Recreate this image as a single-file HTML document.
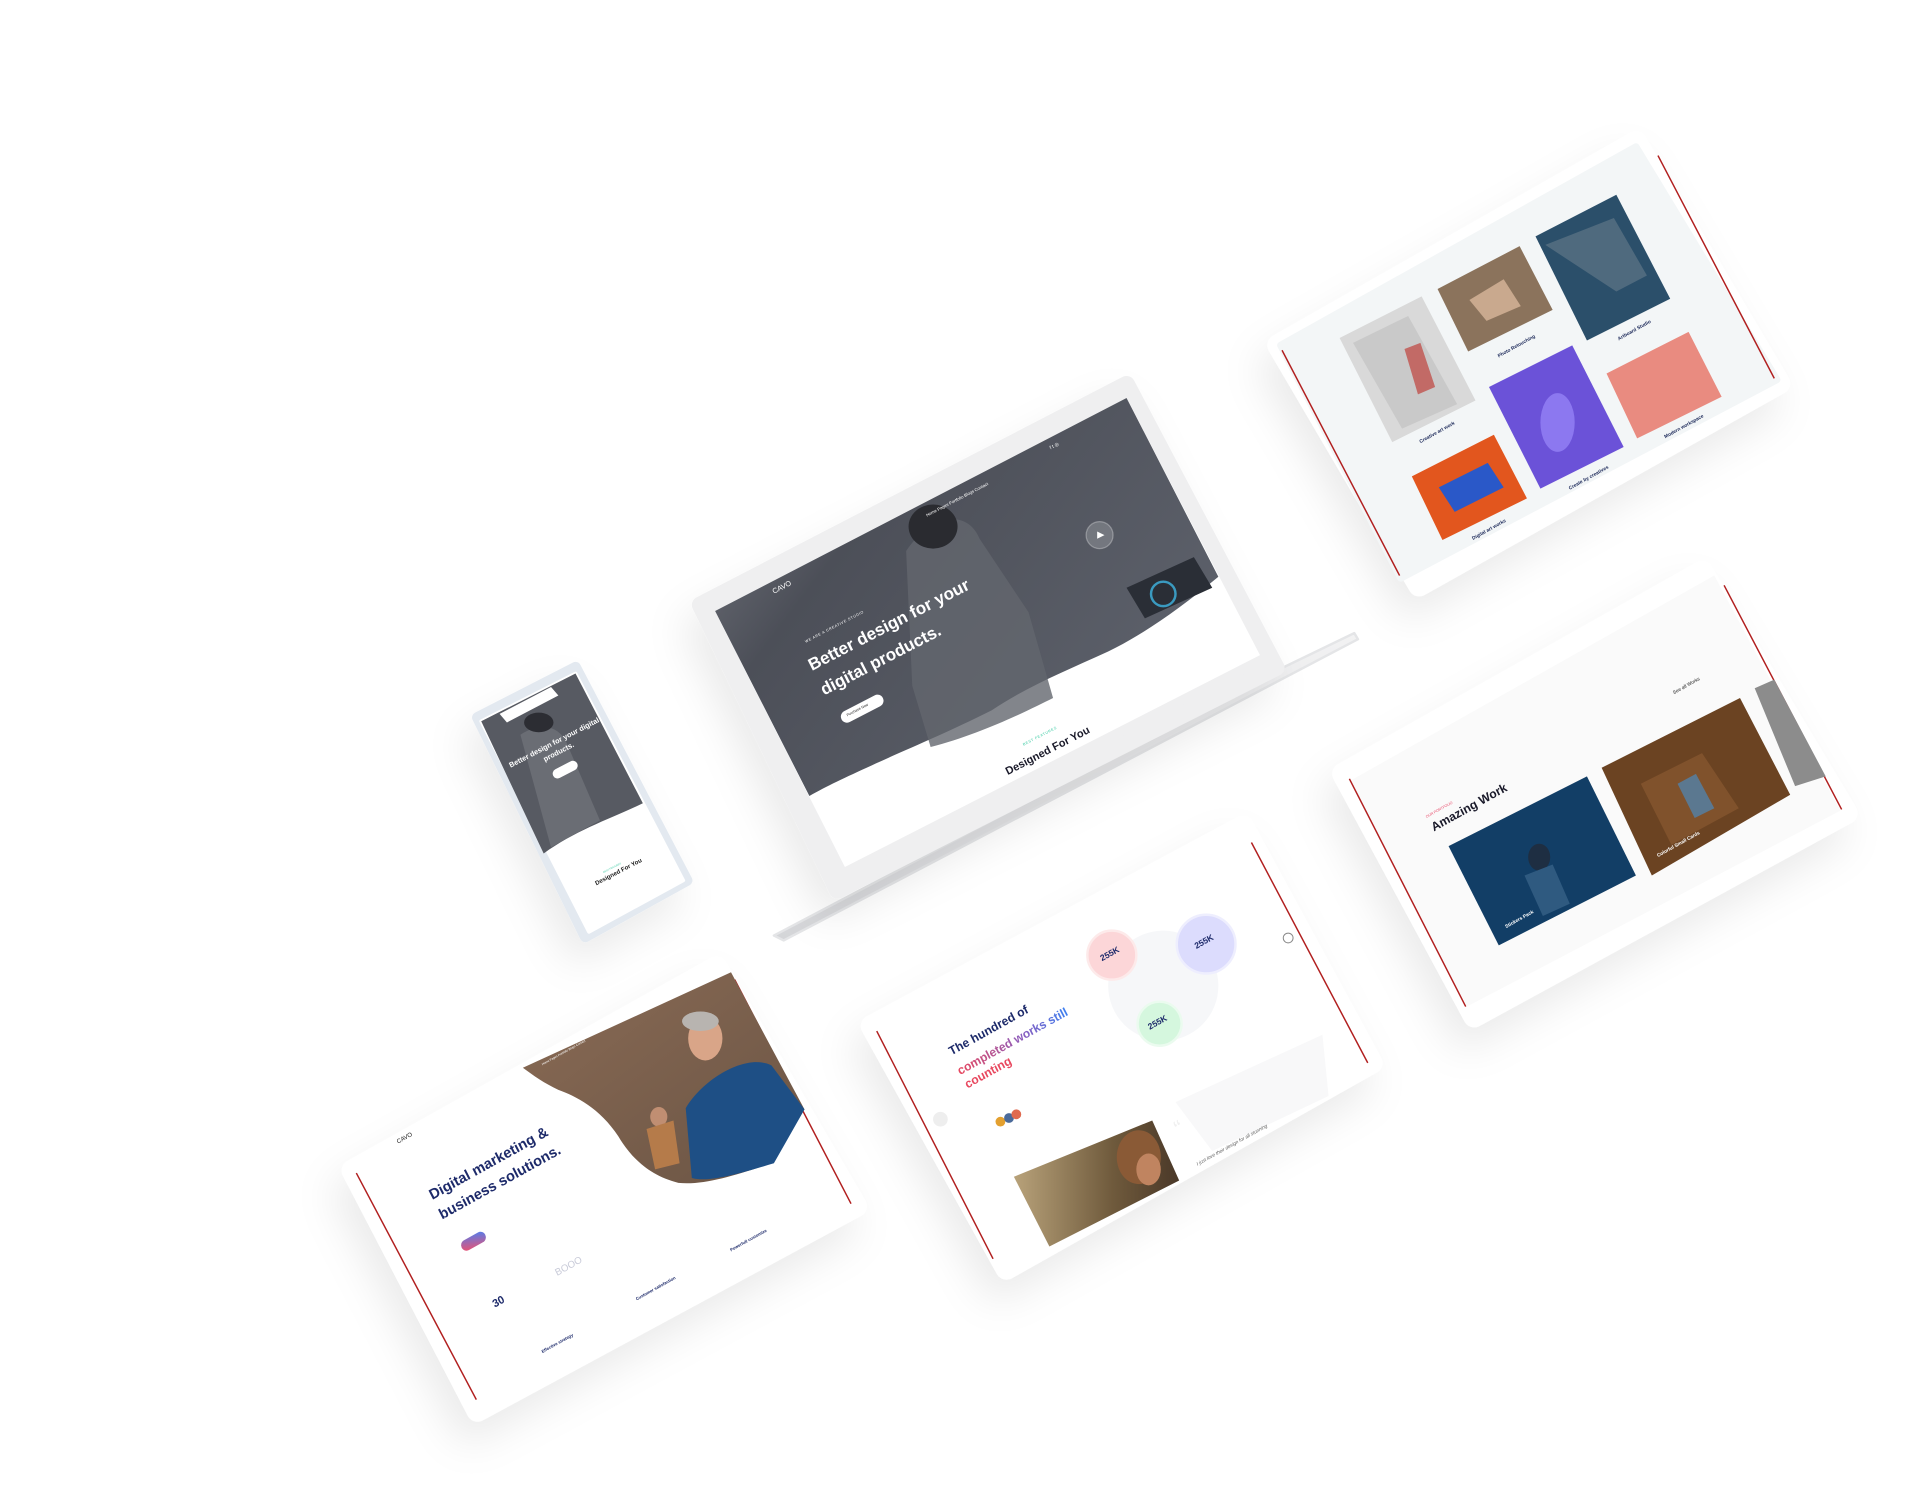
<!DOCTYPE html>
<html><head><meta charset="utf-8"><style>
html,body{margin:0;padding:0;background:#fff;width:1920px;height:1485px;overflow:hidden}
svg{display:block}
text{font-family:"Liberation Sans",sans-serif}
</style></head><body>
<svg width="1920" height="1485" viewBox="0 0 1568 1212.7" xmlns="http://www.w3.org/2000/svg">
<defs>
<filter id="sh" x="-30%" y="-30%" width="160%" height="160%"><feDropShadow dx="-8" dy="18" stdDeviation="16" flood-color="#000" flood-opacity="0.08"/></filter>
<linearGradient id="hero" x1="0" y1="0" x2="1" y2="0.6"><stop offset="0" stop-color="#7a7d85"/><stop offset="0.35" stop-color="#4c4f58"/><stop offset="1" stop-color="#5d616b"/></linearGradient>
<linearGradient id="btn" x1="0" y1="1" x2="1" y2="0"><stop offset="0" stop-color="#f0506e"/><stop offset="1" stop-color="#4f7ff0"/></linearGradient>
<linearGradient id="txtg" x1="0" y1="0" x2="1" y2="0"><stop offset="0" stop-color="#e8485f"/><stop offset="0.6" stop-color="#8a5fc0"/><stop offset="1" stop-color="#3d7ff0"/></linearGradient>
<linearGradient id="brn" x1="0" y1="0" x2="1" y2="1"><stop offset="0" stop-color="#8a6b55"/><stop offset="1" stop-color="#6a5444"/></linearGradient>
<linearGradient id="wom" x1="0" y1="0" x2="1" y2="0"><stop offset="0" stop-color="#b8a27a"/><stop offset="0.6" stop-color="#6f5a3c"/><stop offset="1" stop-color="#4a3828"/></linearGradient>
<linearGradient id="base" x1="0" y1="0" x2="0" y2="1"><stop offset="0" stop-color="#f2f2f3"/><stop offset="1" stop-color="#d4d5d8"/></linearGradient>
</defs>

<!-- TOP RIGHT TABLET -->
<g filter="url(#sh)">
<polygon points="1044,282 1336,116 1453,313 1159,478" fill="#fff" stroke="#fff" stroke-width="18" stroke-linejoin="round"/>
</g>
<polygon points="1046,282 1336,120 1451,310 1144,472" fill="#f3f6f7" stroke="#f3f6f7" stroke-width="6" stroke-linejoin="round"/>
<line x1="1047" y1="286" x2="1143" y2="470" stroke="#b11f1f" stroke-width="1.2"/>
<line x1="1354" y1="127" x2="1449" y2="309" stroke="#b11f1f" stroke-width="1.2"/>
<polygon points="1094,276 1161,242 1205,327 1137,361" fill="#d9d9d9"/>
<polygon points="1105,280 1150,258 1190,330 1145,350" fill="#b9b9b9" opacity="0.5"/>
<polygon points="1147,285 1160,280 1172,316 1158,322" fill="#c26a66"/>
<polygon points="1174,236 1241,201 1268,253 1199,287" fill="#8b735c"/>
<polygon points="1200,245 1228,228 1242,250 1214,262" fill="#c9a98e"/>
<polygon points="1254,193 1320,159 1364,244 1296,278" fill="#2b4f6a"/>
<polygon points="1262,200 1318,178 1345,225 1320,238" fill="#4f6a7e"/>
<polygon points="1216,316 1284,282 1326,365 1258,399" fill="#6b52d8"/>
<ellipse cx="1272" cy="345" rx="14" ry="24" fill="#8c78f0"/>
<polygon points="1312,305 1379,271 1406,324 1337,358" fill="#e98b80"/>
<polygon points="1153,389 1220,355 1247,407 1178,441" fill="#e2561e"/>
<polygon points="1175,398 1215,378 1228,398 1188,418" fill="#2a58c8"/>
<g font-size="4" fill="#1d2a5a" font-weight="bold">
<text transform="matrix(0.874 -0.486 0.457 0.89 1160 362)">Creative art work</text>
<text transform="matrix(0.874 -0.486 0.457 0.89 1224 292)">Photo Retouching</text>
<text transform="matrix(0.874 -0.486 0.457 0.89 1322 278)">Artboard Studio</text>
<text transform="matrix(0.874 -0.486 0.457 0.89 1282 400)">Create by creatives</text>
<text transform="matrix(0.874 -0.486 0.457 0.89 1360 358)">Modern workspace</text>
<text transform="matrix(0.874 -0.486 0.457 0.89 1203 441)">Digital art works</text>
</g>

<!-- RIGHT MIDDLE TABLET -->
<g filter="url(#sh)">
<polygon points="1097,632 1390,467 1508,664 1204,830" fill="#fff" stroke="#fff" stroke-width="18" stroke-linejoin="round"/>
</g>
<polygon points="1102,638 1400,470 1503,662 1198,822" fill="#fafafa"/>
<line x1="1102" y1="636" x2="1197" y2="822" stroke="#b11f1f" stroke-width="1.2"/>
<line x1="1408" y1="478" x2="1504" y2="661" stroke="#b11f1f" stroke-width="1.2"/>
<polygon points="1183,691 1296,634 1336,715 1224,772" fill="#123e66"/>
<ellipse cx="1257" cy="700" rx="9" ry="11" fill="#1e2e42"/>
<polygon points="1245,715 1268,706 1282,738 1260,748" fill="#2f5a80"/>
<polygon points="1308,627 1421,570 1462,649 1349,715" fill="#6b4322"/>
<polygon points="1340,640 1390,615 1420,660 1365,690" fill="#80522c"/>
<polygon points="1370,640 1385,632 1400,660 1384,668" fill="#5b7890"/>
<polygon points="1433,562 1449,555 1491,634 1466,642" fill="#8c8c8c"/>
<text transform="matrix(0.874 -0.486 0.457 0.89 1171 679)" font-size="10" font-weight="bold" fill="#1a1a2a">Amazing Work</text>
<text transform="matrix(0.874 -0.486 0.457 0.89 1165 668)" font-size="3" fill="#e84a6a">OUR PORTFOLIO</text>
<text transform="matrix(0.874 -0.486 0.457 0.89 1367 567)" font-size="4" fill="#222">See all Works</text>
<text transform="matrix(0.874 -0.486 0.457 0.89 1230 758)" font-size="4" font-weight="bold" fill="#fff">Stickers Pack</text>
<text transform="matrix(0.874 -0.486 0.457 0.89 1354 700)" font-size="4" font-weight="bold" fill="#fff">Colorful Small Cards</text>

<!-- LAPTOP base -->
<polygon points="632,764 1046,546 1106,517 1109,522 640,768" fill="url(#base)" stroke="#e4e5e7" stroke-width="2" stroke-linejoin="round"/>
<!-- LAPTOP lid -->
<g filter="url(#sh)">
<polygon points="572,494 920,314 1042,545 684,727" fill="#efeff0" stroke="#efeff0" stroke-width="14" stroke-linejoin="round"/>
</g>
<polygon points="584,499 920,325 1029,535 690,708" fill="#fff"/>
<path d="M584,499 L920,325 L995,471 C960,500 930,520 905,532 C870,548 840,560 810,580 C770,600 740,612 712,625 C690,635 675,642 661,650 Z" fill="url(#hero)"/>
<path d="M740,450 C760,420 790,415 800,440 L840,500 L860,570 C840,580 800,600 760,610 L745,560 Z" fill="#63666e" opacity="0.8"/>
<ellipse cx="762" cy="430" rx="20" ry="18" fill="#2a2b30"/>
<polygon points="920,480 975,455 990,480 935,505" fill="#2a2e36"/>
<circle cx="950" cy="485" r="10" fill="none" stroke="#3a9ac0" stroke-width="2"/>
<circle cx="898" cy="437" r="11" fill="#fff" fill-opacity="0.18" stroke="#fff" stroke-opacity="0.3"/>
<polygon points="896,434 902,437 896,440" fill="#fff"/>
<g fill="#fff">
<text transform="matrix(0.888 -0.46 0.45 0.89 663 548)" font-size="14" font-weight="bold">Better design for your</text>
<text transform="matrix(0.888 -0.46 0.45 0.89 673 568)" font-size="14" font-weight="bold">digital products.</text>
<text transform="matrix(0.888 -0.46 0.45 0.89 632 485)" font-size="6">CAVO</text>
<text transform="matrix(0.888 -0.46 0.45 0.89 658 525)" font-size="3" letter-spacing="0.5">WE ARE A CREATIVE STUDIO</text>
<text transform="matrix(0.888 -0.46 0.45 0.89 757 422)" font-size="3.5">Home Pages Portfolio Blogs Contact</text>
<text transform="matrix(0.888 -0.46 0.45 0.89 858 367)" font-size="4">f  t  ◎</text>
</g>
<rect x="0" y="0" width="38" height="10" rx="5" fill="#fff" transform="matrix(0.888 -0.46 0.45 0.89 685 583)"/>
<text transform="matrix(0.888 -0.46 0.45 0.89 692 585)" font-size="3" fill="#222">Purchase Now</text>
<text transform="matrix(0.888 -0.46 0.45 0.89 836 609)" font-size="3" fill="#35c9a0" letter-spacing="0.5">BEST FEATURES</text>
<text transform="matrix(0.888 -0.46 0.45 0.89 823 633)" font-size="9" font-weight="bold" fill="#1a1a2a">Designed For You</text>

<!-- PHONE -->
<g filter="url(#sh)">
<polygon points="390,586 470,545 561,719 478,765" fill="#f6f8fa" stroke="#e3e9f0" stroke-width="9" stroke-linejoin="round"/>
</g>
<polygon points="393,589 470,550 558,719 481,761" fill="#fff" stroke="#fff" stroke-width="3" stroke-linejoin="round"/>
<path d="M393,589 L470,550 L525,656 C500,668 470,678 444,697 Z" fill="#575a62"/>
<path d="M425,600 C440,590 455,592 462,605 L490,670 C475,678 460,686 450,692 Z" fill="#6a6d74"/>
<ellipse cx="440" cy="590" rx="12" ry="8" fill="#2c2d33"/>
<polygon points="408,583 450,561 456,568 414,590" fill="#fff"/>
<text transform="matrix(0.888 -0.46 0.45 0.89 417 627)" font-size="6" font-weight="bold" fill="#fff">Better design for your digital</text>
<text transform="matrix(0.888 -0.46 0.45 0.89 445 622)" font-size="6" font-weight="bold" fill="#fff">products.</text>
<rect x="0" y="0" width="22" height="8" rx="4" fill="#fff" transform="matrix(0.888 -0.46 0.45 0.89 450 630)"/>
<text transform="matrix(0.888 -0.46 0.45 0.89 487 723)" font-size="5" font-weight="bold" fill="#222">Designed For You</text>
<text transform="matrix(0.888 -0.46 0.45 0.89 493 713)" font-size="2" fill="#35c9a0">BEST FEATURES</text>

<!-- BOTTOM LEFT TABLET -->
<g filter="url(#sh)">
<polygon points="288,956 585,790 699,985 390,1152" fill="#fff" stroke="#fff" stroke-width="18" stroke-linejoin="round"/>
</g>
<line x1="291" y1="958" x2="389" y2="1143" stroke="#b11f1f" stroke-width="1.2"/>
<line x1="600" y1="800" x2="695" y2="983" stroke="#b11f1f" stroke-width="1.2"/>
<path d="M427,872 L597,794 L657,906 L630,950 C600,960 575,968 554,966 C530,960 515,945 505,928 C490,905 470,895 456,890 C445,885 435,878 427,872 Z" fill="url(#brn)"/>
<path d="M560,905 C575,880 610,860 630,870 L657,906 L632,950 C605,958 580,966 565,962 Z" fill="#1e4f85"/>
<ellipse cx="576" cy="848" rx="14" ry="18" fill="#d9a588"/>
<ellipse cx="572" cy="834" rx="15" ry="8" fill="#b8b4b0"/>
<ellipse cx="538" cy="912" rx="7" ry="8" fill="#c08e72"/>
<polygon points="528,922 550,915 555,950 535,955" fill="#b57b4a"/>
<g fill="#1d2a6a" font-weight="bold">
<text transform="matrix(0.874 -0.486 0.457 0.89 353 980)" font-size="12">Digital marketing &amp;</text>
<text transform="matrix(0.874 -0.486 0.457 0.89 361 996)" font-size="12">business solutions.</text>
</g>
<text transform="matrix(0.874 -0.486 0.457 0.89 325 934)" font-size="5" fill="#222">CAVO</text>
<text transform="matrix(0.874 -0.486 0.457 0.89 443 870)" font-size="2.5" fill="#fff">Home  Pages  Portfolio  Blogs  Contact</text>
<rect x="0" y="0" width="22" height="9" rx="4.5" fill="url(#btn)" transform="matrix(0.874 -0.486 0.457 0.89 375 1015)"/>
<text transform="matrix(0.874 -0.486 0.457 0.89 404 1068)" font-size="9" font-weight="bold" fill="#1d2a6a">30</text>
<text transform="matrix(0.874 -0.486 0.457 0.89 455 1042)" font-size="8" fill="#c8cad8">BOOO</text>
<g font-size="3.5" font-weight="bold" fill="#1d2a6a">
<text transform="matrix(0.874 -0.486 0.457 0.89 443 1105)">Effective strategy</text>
<text transform="matrix(0.874 -0.486 0.457 0.89 520 1062)">Customer satisfaction</text>
<text transform="matrix(0.874 -0.486 0.457 0.89 597 1022)">Powerfull customize</text>
</g>

<!-- BOTTOM MIDDLE TABLET -->
<g filter="url(#sh)">
<polygon points="712,838 1015,675 1120,868 822,1036" fill="#fff" stroke="#fff" stroke-width="18" stroke-linejoin="round"/>
</g>
<line x1="716" y1="842" x2="811" y2="1028" stroke="#b11f1f" stroke-width="1.2"/>
<line x1="1022" y1="688" x2="1117" y2="868" stroke="#b11f1f" stroke-width="1.2"/>
<ellipse cx="950" cy="805" rx="45" ry="45" fill="#f6f7f9"/>
<circle cx="908" cy="780" r="20" fill="#fcd6d8" stroke="#fdeaea" stroke-width="2"/>
<circle cx="985" cy="771" r="24" fill="#dcdcfd" stroke="#eeeefe" stroke-width="2"/>
<circle cx="947" cy="836" r="18" fill="#d5f7de" stroke="#ebfbef" stroke-width="2"/>
<g font-size="7" font-weight="bold" fill="#1d2a6a">
<text transform="matrix(0.874 -0.486 0.457 0.89 900 785)">255K</text>
<text transform="matrix(0.874 -0.486 0.457 0.89 977 775)">255K</text>
<text transform="matrix(0.874 -0.486 0.457 0.89 939 841)">255K</text>
</g>
<polygon points="960,900 1080,845 1085,895 990,940" fill="#f8f8f9"/>
<text transform="matrix(0.874 -0.486 0.457 0.89 777 862)" font-size="10" font-weight="bold" fill="#1d2a6a">The hundred of</text>
<text transform="matrix(0.874 -0.486 0.457 0.89 784 878)" font-size="10" font-weight="bold" fill="url(#txtg)">completed works still</text>
<text transform="matrix(0.874 -0.486 0.457 0.89 790 889)" font-size="10" font-weight="bold" fill="#e8485f">counting</text>
<polygon points="828,961 941,915 963,964 857,1018" fill="url(#wom)"/>
<ellipse cx="930" cy="945" rx="18" ry="22" fill="#8a5a36"/>
<ellipse cx="938" cy="955" rx="10" ry="13" fill="#c08460"/>
<circle cx="768" cy="914" r="6" fill="#eeeeee"/>
<circle cx="1052" cy="766" r="4" fill="none" stroke="#888" stroke-width="0.8"/>
<text transform="matrix(0.874 -0.486 0.457 0.89 978 952)" font-size="4" font-style="italic" fill="#666">I just love their design for all stunning</text>
<text transform="matrix(0.874 -0.486 0.457 0.89 963 928)" font-size="18" fill="#f0f0f0">“</text>
<circle cx="817" cy="916" r="4" fill="#e3a030"/><circle cx="824" cy="913" r="4" fill="#4a6a9a"/><circle cx="830" cy="910" r="4" fill="#e06a50"/>
</svg>
</body></html>
